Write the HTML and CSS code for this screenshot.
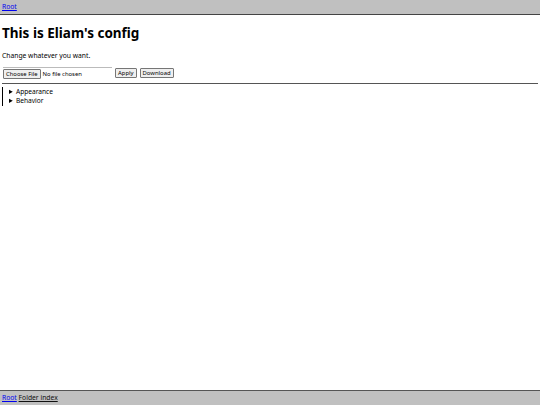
FILE: index.html
```html
<!DOCTYPE html>
<html>
<head>
<meta charset="utf-8">
<link rel="stylesheet" href="styles.css">
</head>
<body>
<div class="page">
  <nav class="topbar"><a href="#">Root</a></nav>
  <main class="content">
    <h1 class="title">This is Eliam's config</h1>
    <p class="lead">Change whatever you want.</p>
    <div class="controls">
      <div class="file"><span class="btn">Choose File</span><span class="nofile">No file chosen</span></div>
      <span class="btn">Apply</span>
      <span class="btn">Download</span>
    </div>
    <hr class="rule">
    <div class="tree">
      <details class="item"><summary>Appearance</summary></details>
      <details class="item"><summary>Behavior</summary></details>
    </div>
  </main>
  <footer class="bottombar"><a href="#">Root</a> <a href="#" class="plain">Folder index</a></footer>
</div>
</body>
</html>
```
FILE: styles.css
```css
html, body { margin: 0; padding: 0; height: 100%; }
body { font-family: "Noto Sans", sans-serif; font-size: 6.75px; color: #000; background: #fff; }
.page { display: flex; flex-direction: column; height: 405px; }
.topbar { background: #c0c0c0; border-bottom: 1px solid #444; height: 14px; padding-left: 2px; line-height: 14px; }
.topbar a, .bottombar a { color: #00e; text-decoration: underline; }
.bottombar a.plain { color: #111; }
.content { flex: 1; padding: 0 2px; }
.title { font-size: 13.5px; font-weight: bold; margin: 10px 0 0; line-height: 16px; }
.lead { margin: 10px 0 0; line-height: 9px; }
.controls { display: flex; align-items: center; margin-top: 7px; gap: 3px; }
.file { display: flex; align-items: center; width: 109px; border-top: 1px solid #bbb; margin-left: 1px; padding-top: 1px; }
.btn { border: 1px solid #767676; background: #efefef; border-radius: 1px; padding: 0 2px; font-size: 5.9px; line-height: 8px; }
.nofile { font-size: 5.9px; margin-left: 2px; }
.rule { border: 0; border-top: 1px solid #555; margin: 4px 0 0; }
.tree { border-left: 1px solid #000; margin-top: 3px; padding-left: 6px; padding-bottom: 1px; }
.item summary { line-height: 9px; font-size: 6.6px; cursor: pointer; }
.bottombar { background: #c0c0c0; border-top: 1px solid #555; height: 14px; line-height: 14px; padding-left: 2px; }
```
